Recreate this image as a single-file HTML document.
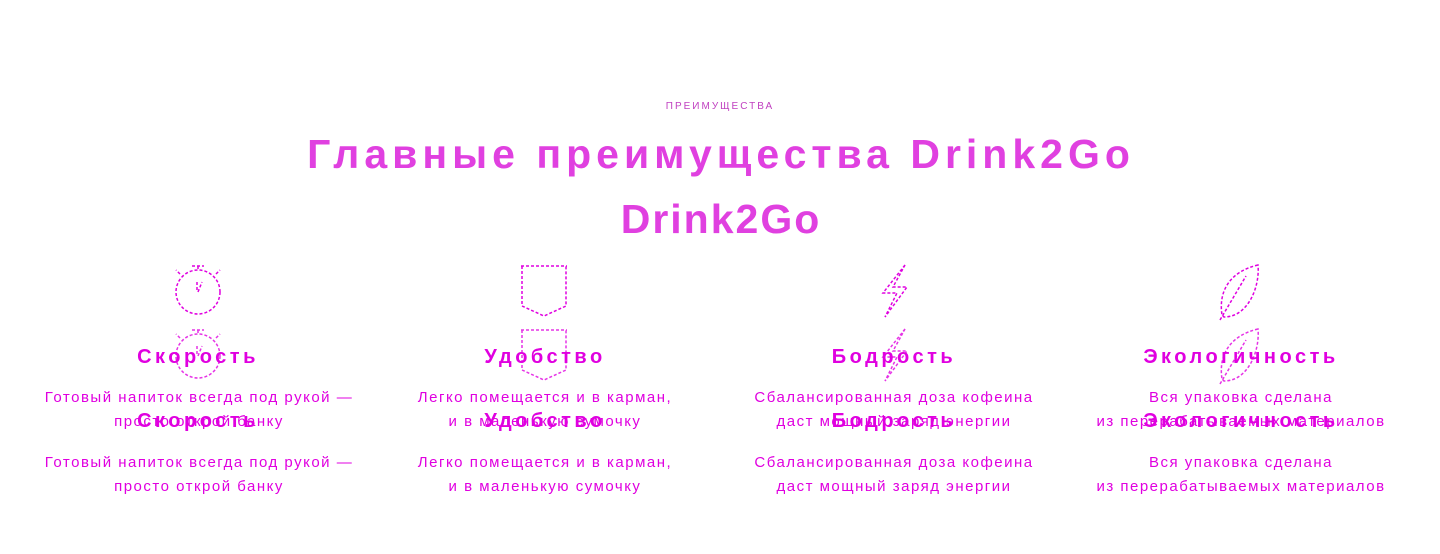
<!DOCTYPE html>
<html><head><meta charset="utf-8"><style>
html,body{margin:0;width:1440px;height:554px;background:#fff;overflow:hidden;position:relative;font-family:"Liberation Sans","Noto Sans CJK SC",sans-serif;color:#e600e6}
.c{position:absolute;text-align:center;white-space:nowrap;transform:translateX(-50%)}
.t{font-size:41px;font-weight:bold;color:#e040e0}
.h{font-size:20px;font-weight:bold;color:#e000e0;letter-spacing:3.5px}
.p{font-size:15px;line-height:24px;color:#e000e0;letter-spacing:1.5px}
.s{font-size:10px;color:#c040c0;letter-spacing:2px}
svg{position:absolute;left:0;top:0}
</style></head><body>
<div class="c s" style="left:720px;top:101px">ПРЕИМУЩЕСТВА</div>
<div class="c t" style="left:721px;top:131px;letter-spacing:5px">Главные преимущества Drink2Go</div>
<div class="c t" style="left:721px;top:196px;letter-spacing:2px">Drink2Go</div>

<svg width="1440" height="554" fill="none" stroke="#e000e0" stroke-width="1.5" stroke-dasharray="3 2">
<g id="ic">
<circle cx="198" cy="292" r="22"/><path d="M192 266h12M198 266v4M180 274l-4-4M216 274l4-4M198 292l4-10M197 282v10"/>
<path d="M521 266h46M522 266v40l22 10 22-10v-40"/>
<path d="M905 265l-22 28h14l-12 24 22-30h-14z"/>
<path d="M1258 265c-26 6-40 24-36 50l2 2c24 0 36-30 34-52zM1220 320l26-44"/>
</g>
<use href="#ic" y="64" opacity="0.8"/>
</svg>

<div class="c h" style="left:198px;top:346px">Скорость</div>
<div class="c h" style="left:545px;top:346px">Удобство</div>
<div class="c h" style="left:894px;top:346px">Бодрость</div>
<div class="c h" style="left:1241px;top:346px">Экологичность</div>

<div class="c p" style="left:199px;top:386px">Готовый напиток всегда под рукой —<br>просто открой банку</div>
<div class="c p" style="left:545px;top:386px">Легко помещается и в карман,<br>и в маленькую сумочку</div>
<div class="c p" style="left:894px;top:386px">Сбалансированная доза кофеина<br>даст мощный заряд энергии</div>
<div class="c p" style="left:1241px;top:386px">Вся упаковка сделана<br>из перерабатываемых материалов</div>

<div class="c h" style="left:198px;top:410px">Скорость</div>
<div class="c h" style="left:545px;top:410px">Удобство</div>
<div class="c h" style="left:894px;top:410px">Бодрость</div>
<div class="c h" style="left:1241px;top:410px">Экологичность</div>

<div class="c p" style="left:199px;top:451px">Готовый напиток всегда под рукой —<br>просто открой банку</div>
<div class="c p" style="left:545px;top:451px">Легко помещается и в карман,<br>и в маленькую сумочку</div>
<div class="c p" style="left:894px;top:451px">Сбалансированная доза кофеина<br>даст мощный заряд энергии</div>
<div class="c p" style="left:1241px;top:451px">Вся упаковка сделана<br>из перерабатываемых материалов</div>
</body></html>
